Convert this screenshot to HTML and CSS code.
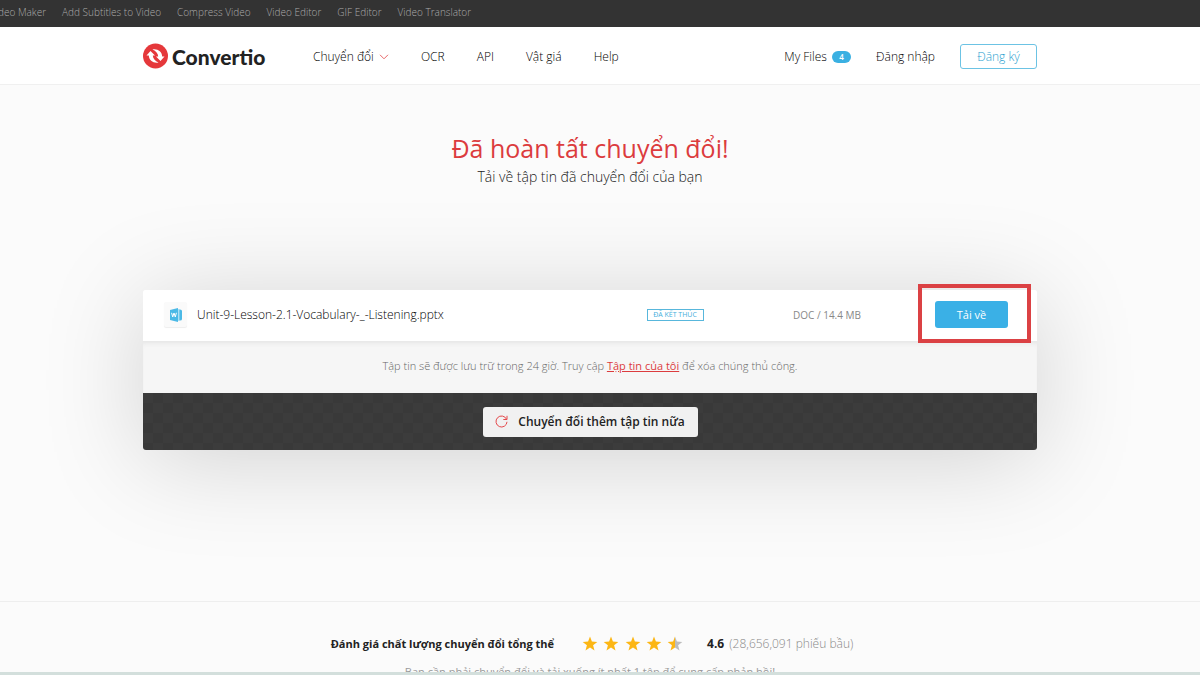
FILE: index.html
```
<!DOCTYPE html>
<html lang="vi">
	<head>
		<meta charset="UTF-8" />
		<meta name="viewport" content="width=device-width, initial-scale=1.0" />
		<title>Convertio</title>
		<link rel="stylesheet" href="styles.css">
	</head>
	<body>
		<div class="page">
			<nav class="topbar">
				<a href="#">Video Maker</a>
				<a href="#">Add Subtitles to Video</a>
				<a href="#">Compress Video</a>
				<a href="#">Video Editor</a>
				<a href="#">GIF Editor</a>
				<a href="#">Video Translator</a>
			</nav>

			<header class="header">
				<div class="container header-inner">
					<a href="#" class="logo">
						<svg width="26" height="26" viewBox="0 0 26 26">
							<circle cx="12.500" cy="13" r="12.500" fill="#e5383b" />
							<path d="M3.500 12.500 L7.500 8 L12 12.500 H9.800 C10 15.500 12 18 15.500 19.500 C10.500 20.500 6 17.500 5.800 12.500 Z" fill="#fff" />
							<path d="M21.500 13.500 L17.500 18 L13 13.500 H15.200 C15 10.500 13 8 9.500 6.500 C14.500 5.500 19 8.500 19.200 13.500 Z" fill="#fff" />
						</svg>
						<span>Convertio</span>
					</a>
					<nav class="menu">
						<a href="#">Chuyển đổi
							<svg width="10" height="6" viewBox="0 0 10 6">
								<path d="M1 0.800 L5 4.800 L9 0.800" fill="none" stroke="#e8686a" />
							</svg>
						</a>
						<a href="#">OCR</a>
						<a href="#">API</a>
						<a href="#">Vật giá</a>
						<a href="#">Help</a>
					</nav>
					<div class="account">
						<a href="#">My Files <span class="count">4</span></a>
						<a href="#">Đăng nhập</a>
						<button type="button" class="signup">Đăng ký</button>
					</div>
				</div>
			</header>

			<main class="main">
				<div class="container">
					<h1>Đã hoàn tất chuyển đổi!</h1>
					<p class="subtitle">Tải về tập tin đã chuyển đổi của bạn</p>

					<div class="card">
						<div class="file">
							<span class="file-icon">
								<svg width="12" height="14" viewBox="0 0 12 14">
									<path d="M0 2 L8 0 V14 L0 12 Z" fill="#4bb9e6" />
									<path d="M8 1.500 H10 Q12 1.500 12 3 V11 Q12 12.500 10 12.500 H8 Z" fill="#4bb9e6" />
									<path d="M8.800 1.500 V12.500" stroke="#d8f0fa" />
									<path d="M1.600 4.800 L2.700 9 L4 5 L5.300 9 L6.400 4.800" fill="none" stroke="#fff" />
								</svg>
							</span>
							<span class="file-name">Unit-9-Lesson-2.1-Vocabulary-_-Listening.pptx</span>
							<span class="file-status"><span class="tag">ĐÃ KẾT THÚC</span></span>
							<span class="file-size">DOC / 14.4 MB</span>
							<div class="file-action">
								<button type="button" class="download">Tải về</button>
							</div>
						</div>
						<p class="note">Tập tin sẽ được lưu trữ trong 24 giờ. Truy cập <a href="#">Tập tin của tôi</a> để xóa chúng thủ công.</p>
						<div class="card-footer">
							<button type="button" class="again">
								<svg width="13" height="13" viewBox="0 0 13 13">
									<path d="M11.500 4.200 A5.500 5.500 0 1 0 12 6.800 M12 0.800 V4.500 H8.300" fill="none" stroke="#e5484b" />
								</svg>
								Chuyển đổi thêm tập tin nữa
							</button>
						</div>
					</div>
				</div>
			</main>

			<section class="rating">
				<div class="rating-row">
					<strong class="rating-title">Đánh giá chất lượng chuyển đổi tổng thể</strong>
					<svg class="stars" width="101" height="16" viewBox="0 0 101 16">
						<defs>
							<linearGradient id="half">
								<stop offset="50%" stop-color="#fcb614" />
								<stop offset="50%" stop-color="#bdbdbd" />
							</linearGradient>
							<path id="star" d="M8 0.500 L9.900 5.600 L15.300 5.900 L11.100 9.300 L12.500 14.500 L8 11.600 L3.500 14.500 L4.900 9.300 L0.700 5.900 L6.100 5.600 Z" />
						</defs>
						<g fill="#fcb614">
							<use href="#star" />
							<use href="#star" x="21" />
							<use href="#star" x="43" />
							<use href="#star" x="64" />
							<use href="#star" x="85" fill="url(#half)" />
						</g>
					</svg>
					<div class="score"><strong>4.6</strong> <span>(28,656,091 phiếu bầu)</span></div>
				</div>
				<p class="rating-hint">Bạn cần phải chuyển đổi và tải xuống ít nhất 1 tệp để cung cấp phản hồi!</p>
			</section>
		</div>
		<div class="bottom-strip"></div>
	</body>
</html>
```
FILE: styles.css
```
* {
	box-sizing: border-box;
	margin: 0;
	padding: 0;
}

body {
	display: flex;
	flex-direction: column;
	height: 100vh;
	overflow: hidden;
	background-color: #fbfbfb;
	color: #222;
	font-family: "Open Sans", "Noto Sans", sans-serif;
	font-size: 12px;
}

a {
	color: inherit;
	text-decoration: none;
}

button {
	font-family: inherit;
	cursor: pointer;
}

.page {
	flex: 1;
	min-height: 0;
	overflow: hidden;
}

.container {
	width: 100%;
	max-width: 894px;
	margin: 0 auto;
}

.topbar {
	display: flex;
	gap: 16px;
	height: 27px;
	margin-left: -10px;
	background-color: #333;
	color: #aaa;
	font-size: 10px;
	font-weight: 300;
	line-height: 24px;
	white-space: nowrap;
}

.header {
	padding-right: 20px;
	background-color: #fff;
	border-bottom: 1px solid #f0f0f0;
}

.header-inner {
	display: flex;
	align-items: center;
	height: 57px;
	padding-top: 1px;
}

.logo {
	display: flex;
	align-items: center;
	gap: 3px;
	width: 170px;
	color: #222;
	font-family: Lato, sans-serif;
	font-size: 21px;
	font-weight: 900;
}

.menu,
.account {
	display: flex;
	align-items: center;
	color: #000;
	font-weight: 300;
}

.menu {
	gap: 32px;
}

.menu svg {
	margin-left: 2px;
	vertical-align: middle;
}

.account {
	gap: 25px;
	margin-left: auto;
}

.count {
	display: inline-block;
	width: 19px;
	margin-left: 2px;
	border-radius: 6px;
	background-color: #3ab0e2;
	color: #fff;
	font-size: 8px;
	font-weight: 600;
	line-height: 12px;
	text-align: center;
	vertical-align: middle;
}

.signup {
	width: 77px;
	height: 25px;
	border: 1px solid #6cc3e4;
	border-radius: 3px;
	background: #fff;
	color: #2a9fd0;
	font-size: 12px;
	font-weight: 300;
}

.main {
	height: 516px;
	padding: 45px 20px 0 0;
	text-align: center;
}

h1 {
	color: #dc3c3e;
	font-size: 25px;
	font-weight: 400;
	line-height: 36px;
}

.subtitle {
	color: #222;
	font-size: 14px;
	font-weight: 300;
	line-height: 22px;
}

.card {
	margin-top: 102px;
	border-radius: 3px;
	box-shadow: 0 10px 100px rgba(0, 0, 0, 0.17);
}

.file {
	display: grid;
	grid-template-columns: 54px 1fr 88px 216px 102px;
	align-items: center;
	height: 51px;
	padding-bottom: 2px;
	border-radius: 3px 3px 0 0;
	background-color: #fff;
}

.file-icon {
	display: flex;
	align-items: center;
	justify-content: center;
	width: 23px;
	height: 25px;
	margin-left: 21px;
	border-radius: 2px;
	background-color: #fafafa;
	box-shadow: 0 1px 1px #eee;
}

.file-name {
	color: #000;
	font-weight: 300;
	text-align: left;
}

.tag {
	display: block;
	width: 57px;
	margin: 0 auto;
	border: 1px solid #58b7dc;
	color: #46afdc;
	font-size: 7px;
	line-height: 10px;
	white-space: nowrap;
}

.file-size {
	color: #888;
	font-size: 10px;
}

.file-action {
	position: relative;
	width: 73px;
}

/* red frame around the download button */
.file-action::after {
	content: "";
	position: absolute;
	inset: -17px -23px -15px -17px;
	border: 4px solid #db4144;
	pointer-events: none;
}

.download {
	display: block;
	width: 100%;
	height: 27px;
	border: none;
	border-radius: 3px;
	background-color: #3ab0e6;
	color: #fff;
	font-size: 11px;
}

.note {
	padding-bottom: 2px;
	background-color: #f6f6f6;
	box-shadow: inset 0 5px 5px -3px #e4e4e4;
	color: #666;
	font-size: 11px;
	font-weight: 300;
	line-height: 50px;
}

.note a {
	color: #dc3c3e;
	font-weight: 400;
	text-decoration: underline;
}

.card-footer {
	display: flex;
	align-items: center;
	justify-content: center;
	height: 57px;
	border-radius: 0 0 3px 3px;
	background: repeating-conic-gradient(#393939 0% 25%, #3c3c3c 0% 50%) 0 0 / 20px 20px;
}

.again {
	display: flex;
	align-items: center;
	justify-content: center;
	gap: 10px;
	width: 215px;
	height: 30px;
	border: none;
	border-radius: 3px;
	background-color: #f1f1f1;
	color: #222;
	font-size: 12px;
	font-weight: 600;
}

.rating {
	padding: 32px 20px 0 0;
	border-top: 1px solid #eee;
	text-align: center;
}

.rating-row {
	display: flex;
	align-items: center;
	justify-content: center;
	padding-left: 4px;
	line-height: 20px;
}

.rating-title {
	font-size: 11px;
}

.stars {
	margin: 0 24px 0 28px;
}

.score span {
	margin-left: 2px;
	color: #888;
	font-weight: 300;
}

.rating-hint {
	margin-top: 9px;
	color: #999;
	font-size: 11px;
	line-height: 18px;
}

.bottom-strip {
	height: 3px;
	background-color: #d3dfdc;
}
```
